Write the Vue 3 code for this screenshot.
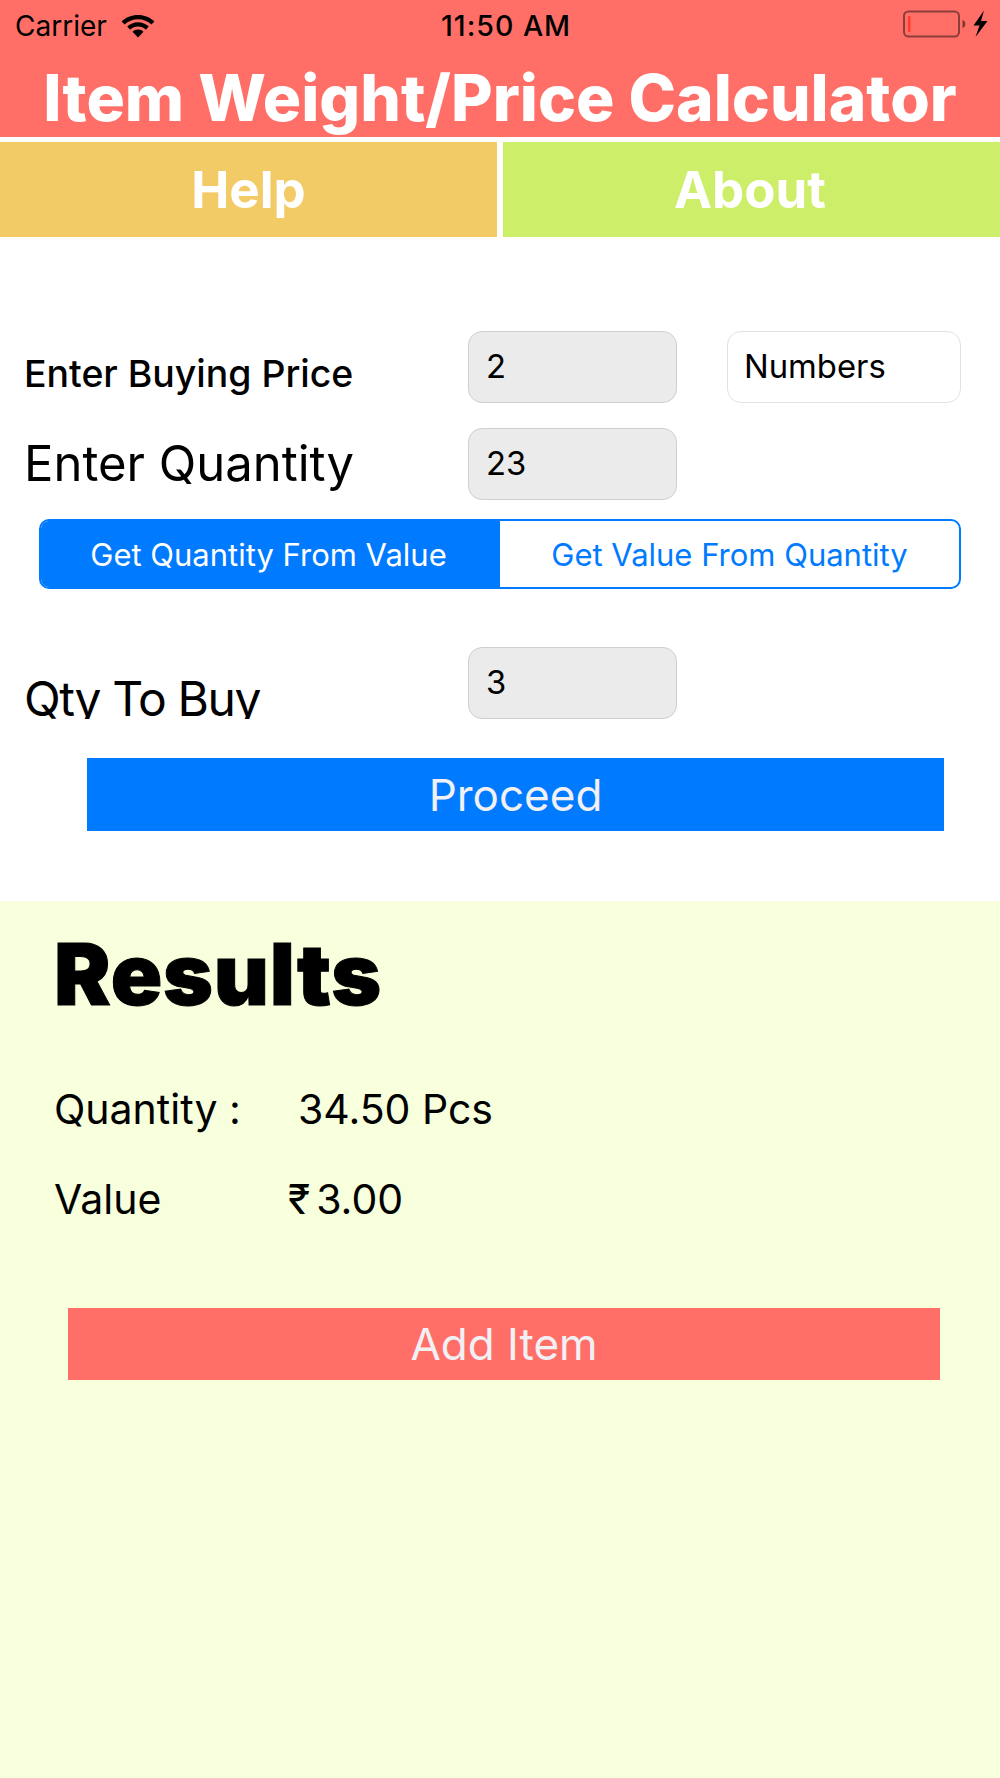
<script setup>
const rows = { price: '2', qty: '23', buy: '3' }
</script>

<template>
  <div class="page">
    <header class="head">
      <div class="status">
        <div class="status-left">
          <span class="carrier">Carrier</span>
          <svg class="wifi" width="36" height="26" viewBox="0 0 36 26">
            <path d="M18 3C11.600 3 5.900 5.400 1.600 9.400l3 3.200C8.100 9.300 12.800 7.300 18 7.300s9.900 2 13.400 5.300l3-3.200C30.100 5.400 24.400 3 18 3z" fill="#000"/>
            <path d="M18 10.300c-4.200 0-8 1.600-10.800 4.300l3 3.100c2-1.900 4.800-3.100 7.800-3.100s5.800 1.200 7.800 3.100l3-3.100C26 11.900 22.200 10.300 18 10.300z" fill="#000"/>
            <path d="M18 17.500c-2.200 0-4.100.8-5.500 2.200L18 25.500l5.500-5.800c-1.400-1.400-3.300-2.200-5.500-2.200z" fill="#000"/>
          </svg>
        </div>
        <span class="time">11:50 AM</span>
        <div class="status-right">
          <svg width="90" height="28" viewBox="0 0 90 28">
            <rect x="4" y="1.500" width="55" height="25" rx="4.500" fill="none" stroke="#000" stroke-opacity=".45" stroke-width="2"/>
            <rect x="8" y="6" width="2.500" height="16" rx="1" fill="#ff3b30"/>
            <path d="M62.500 10c1.800.4 2.800 2 2.800 4s-1 3.600-2.800 4z" fill="#000" fill-opacity=".5"/>
            <path d="M84 0.500L73.500 15.500H79.500L75.500 27L87.500 11H81z" fill="#000"/>
          </svg>
        </div>
      </div>
      <h1 class="title">Item Weight/Price Calculator</h1>
    </header>

    <nav class="tabs">
      <div class="tab help">Help</div>
      <div class="tab about">About</div>
    </nav>

    <main class="form">
      <div class="row">
        <label class="label small">Enter Buying Price</label>
        <div class="field">{{ rows.price }}</div>
        <div class="field unit">Numbers</div>
      </div>
      <div class="row second">
        <label class="label">Enter Quantity</label>
        <div class="field">{{ rows.qty }}</div>
      </div>
      <div class="segment">
        <div class="seg active">Get Quantity From Value</div>
        <div class="seg">Get Value From Quantity</div>
      </div>
      <div class="row third">
        <label class="label clipped"><span>Qty To Buy</span></label>
        <div class="field">{{ rows.buy }}</div>
      </div>
      <button class="action proceed">Proceed</button>
    </main>

    <section class="results">
      <h2 class="results-title">Results</h2>
      <div class="result first">
        <span class="r-label">Quantity :</span>
        <span class="r-val qty">34.50 Pcs</span>
      </div>
      <div class="result">
        <span class="r-label">Value</span>
        <span class="r-val val">₹<span class="num">3.00</span></span>
      </div>
      <button class="action add">Add Item</button>
    </section>
  </div>
</template>

<style>
html, body { margin: 0; padding: 0; background: #fff; }
</style>

<style scoped>
.page {
  width: 1000px;
  height: 1778px;
  display: flex;
  flex-direction: column;
  font-family: Inter, "Liberation Sans", sans-serif;
  color: #000;
  overflow: hidden;
  background: #fff;
}
.head { height: 137px; background: #ff6f67; box-sizing: border-box; }
.status {
  height: 52px;
  display: flex;
  align-items: center;
  justify-content: space-between;
  padding: 0 0 0 15px;
  position: relative;
}
.status-left { display: flex; align-items: center; gap: 13px; }
.carrier { font-size: 28px; line-height: 52px; }
.wifi { margin-top: -3px; }
.time {
  position: absolute;
  left: 441px;
  top: 0;
  font-size: 28.500px;
  line-height: 52px;
  font-weight: 500;
  letter-spacing: 1px;
}
.status-right { display: flex; margin-right: 10px; margin-top: -4px; }
.title {
  margin: 11px 0 0;
  text-align: center;
  font-size: 64px;
  line-height: 70px;
  font-weight: 800;
  color: #fff;
  white-space: nowrap;
}
.tabs {
  display: flex;
  justify-content: space-between;
  margin-top: 5px;
  height: 95px;
}
.tab {
  width: 497px;
  display: flex;
  align-items: center;
  justify-content: center;
  color: #fff;
  font-size: 51px;
  font-weight: 700;
}
.help { background: #f3cb66; }
.about { background: #cdee69; padding-right: 3px; box-sizing: border-box; }

.form { display: flex; flex-direction: column; padding-top: 94px; height: 664px; box-sizing: border-box; }
.row { display: flex; align-items: flex-start; padding-left: 24px; height: 72px; }
.second { margin-top: 25px; }
.third { margin-top: 58px; }
.label {
  width: 444px;
  height: 72px;
  flex: none;
  display: flex;
  align-items: center;
  font-size: 49px;
  line-height: 72px;
  white-space: nowrap;
}
.small { font-size: 37.400px; font-weight: 500; padding-top: 14px; box-sizing: border-box; }
.clipped { overflow: hidden; align-items: flex-end; font-size: 48px; letter-spacing: -1.400px; }
.clipped span { display: block; line-height: 72px; transform: translateY(16px); }
.field {
  width: 209px;
  height: 72px;
  box-sizing: border-box;
  flex: none;
  background: #ebebeb;
  border: 1px solid #cfcfcf;
  border-radius: 14px;
  padding-left: 17px;
  font-size: 32.800px;
  line-height: 68px;
}
.unit {
  width: 234px;
  margin-left: 50px;
  padding-left: 16px;
  background: #fff;
  border-color: #e2e2e2;
}
.segment {
  margin: 19px 0 0 39px;
  width: 922px;
  height: 70px;
  box-sizing: border-box;
  display: flex;
  border: 2px solid #007aff;
  border-radius: 10px;
  overflow: hidden;
  font-size: 31px;
  color: #007aff;
}
.seg { flex: 1; display: flex; align-items: center; justify-content: center; box-sizing: border-box; }
.active { flex: none; width: 459px; background: #007aff; color: #fff; padding-right: 4px; }

.action {
  display: block;
  height: 73px;
  border: 0;
  padding: 0;
  font: inherit;
  font-size: 44px;
  color: #f0f0f5;
  text-align: center;
}
.proceed { width: 857px; margin: 39px 0 0 87px; background: #007aff; }

.results { flex: 1; background: #f7ffdc; padding: 0 0 0 54px; }
.results-title {
  margin: 0;
  padding-top: 28px;
  font-size: 85px;
  line-height: 92px;
  font-weight: 900;
  letter-spacing: 0.800px;
  -webkit-text-stroke: 1px #000;
}
.result { display: flex; font-size: 41px; line-height: 50px; }
.first { margin-top: 63px; }
.result + .result { margin-top: 40px; }
.r-label { display: block; width: 234px; }
.qty { margin-left: 10px; }
.val { display: flex; align-items: baseline; gap: 6px; margin-left: 0; }
.add { width: 872px; height: 72px; margin: 84px 0 0 14px; background: #ff6f67; line-height: 70px; }
</style>
